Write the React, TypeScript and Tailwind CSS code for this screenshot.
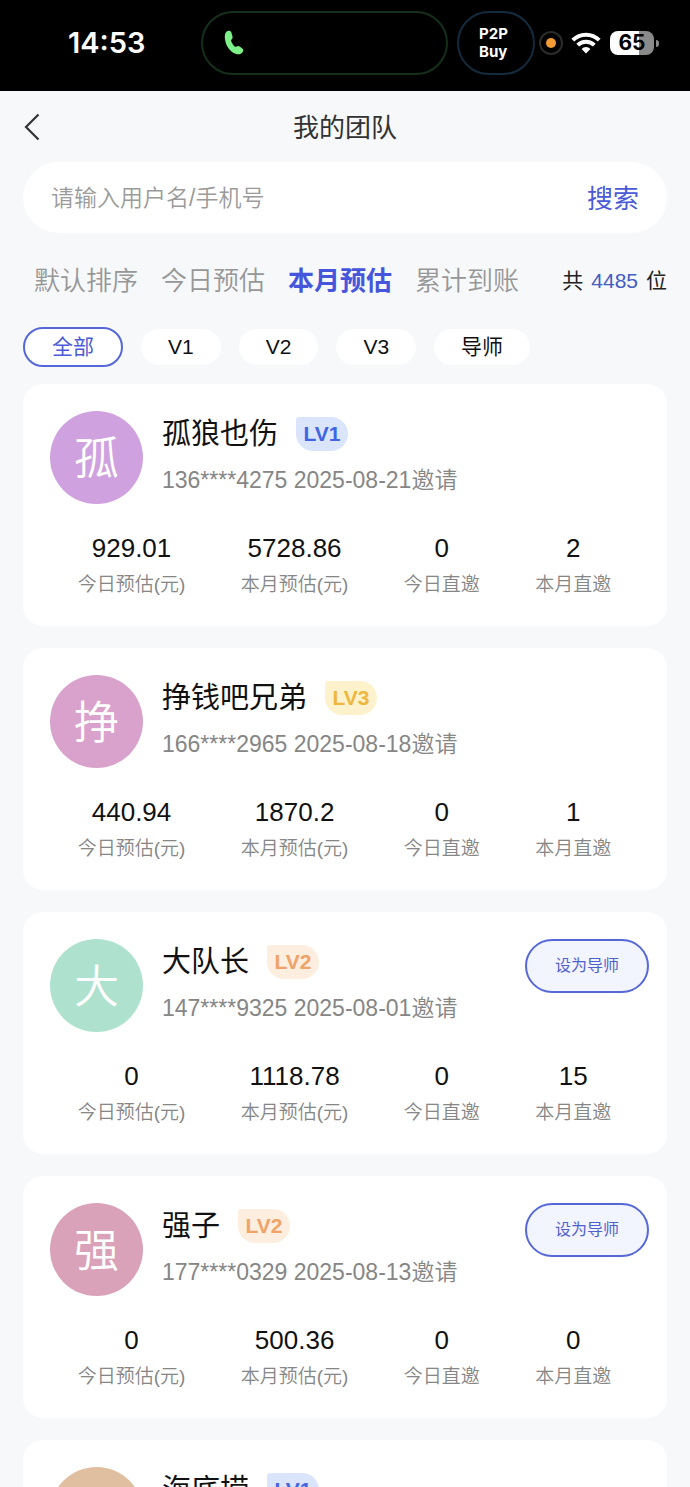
import React from 'react';
import clsx from 'clsx';

type Level = 'LV1' | 'LV2' | 'LV3';

interface Member {
  name: string;
  level: Level;
  color: string;
  info?: string;
  stats?: string[];
  canPromote?: boolean;
}

const SORT_TABS = ['默认排序', '今日预估', '本月预估', '累计到账'];
const FILTERS = ['全部', 'V1', 'V2', 'V3', '导师'];
const STAT_LABELS = ['今日预估(元)', '本月预估(元)', '今日直邀', '本月直邀'];

const LEVEL_STYLES: Record<Level, string> = {
  LV1: 'bg-[#dae4fb] text-[#4164e3]',
  LV2: 'bg-[#fdeedf] text-[#efa368]',
  LV3: 'bg-[#fdf2cb] text-[#efb73e]',
};

const MEMBERS: Member[] = [
  {
    name: '孤狼也伤',
    level: 'LV1',
    color: 'bg-[#cfa2df]',
    info: '136****4275 2025-08-21邀请',
    stats: ['929.01', '5728.86', '0', '2'],
  },
  {
    name: '挣钱吧兄弟',
    level: 'LV3',
    color: 'bg-[#d9a2cd]',
    info: '166****2965 2025-08-18邀请',
    stats: ['440.94', '1870.2', '0', '1'],
  },
  {
    name: '大队长',
    level: 'LV2',
    color: 'bg-[#aee2cf]',
    info: '147****9325 2025-08-01邀请',
    stats: ['0', '1118.78', '0', '15'],
    canPromote: true,
  },
  {
    name: '强子',
    level: 'LV2',
    color: 'bg-[#d9a2b8]',
    info: '177****0329 2025-08-13邀请',
    stats: ['0', '500.36', '0', '0'],
    canPromote: true,
  },
  { name: '海底捞', level: 'LV1', color: 'bg-[#e0bfa0]' },
];

const StatusBar: React.FC = () => (
  <div className="flex h-[91px] shrink-0 items-center bg-black pb-[5px] pl-[68px] pr-[31px] font-['Inter',sans-serif] text-white">
    <span className="w-[133px] text-[29px] leading-8 font-semibold">14:53</span>

    {/* Call island */}
    <div className="flex h-16 flex-1 items-center rounded-full border-2 border-[#15301a] pl-[21px]">
      <svg width="20" height="26" viewBox="0 0 20 26" fill="#7df08a" aria-hidden="true">
        <path d="M3 1.200C4.700.2 6.800.6 7.300 2.200l1.200 4.300c.3 1.400 0 2.200-.9 2.900-.7.6-.7 1.200-.3 2.100.8 1.800 1.700 3.300 3.100 4.700.7.7 1.300.8 2.100.3 1.200-.8 2.200-.8 3.200 0l2.600 2c1.300 1.100 1.300 2.300.2 3.700-1.600 2-4 2.700-6.800 1.600C5.700 22.300 1.200 15 .8 7.600.7 4.600 1.400 2.200 3 1.200Z" />
      </svg>
    </div>

    <div className="ml-[9px] flex h-16 w-[78px] flex-col justify-center rounded-full border-2 border-[#142b3d] pl-5 text-[15px] leading-[18px] font-bold">
      <span>P2P</span>
      <span>Buy</span>
    </div>

    <div className="ml-1 flex size-6 items-center justify-center rounded-full border-2 border-[#2b2b2b]">
      <span className="size-[10px] rounded-full bg-[#f39b35]" />
    </div>

    <svg className="ml-2" width="30" height="22" viewBox="0 0 30 22" fill="none" stroke="#fff" strokeWidth="4" aria-hidden="true">
      <path d="M1.800 8.200a18.700 18.700 0 0 1 26.400 0" />
      <path d="M6.700 13.100a11.800 11.800 0 0 1 16.600 0" />
      <path d="M15 21.500l-4.400-4.600a6.200 6.200 0 0 1 8.800 0z" fill="#fff" stroke="none" />
    </svg>

    <div className="ml-[9px] flex items-center gap-[2px]">
      <span className="flex h-6 w-11 items-center justify-center rounded-lg bg-linear-to-r from-white from-65% to-[#8a8a8a] to-65% text-[21px] leading-6 font-bold text-black">
        65
      </span>
      <span className="h-[7px] w-[3px] rounded-r-full bg-[#8a8a8a]" />
    </div>
  </div>
);

const MemberCard: React.FC<{ member: Member }> = ({ member }) => (
  <li className="rounded-[20px] bg-white pt-[27px] pb-[22px]">
    <div className="flex pl-[27px] pr-[18px]">
      {/* Avatar */}
      <div
        className={clsx(
          'flex size-[93px] shrink-0 items-center justify-center rounded-full pt-1 text-[45px] leading-none font-[350] text-white',
          member.color,
        )}
      >
        {member.name[0]}
      </div>

      <div className="ml-[19px] flex-1">
        <div className="flex h-[46px] items-center">
          <h2 className="text-[29px] leading-9 text-[#111]">{member.name}</h2>
          <span
            className={clsx(
              'ml-[18px] flex h-[34px] w-[52px] items-center justify-center rounded-[17px] rounded-tl-[3px] text-[21px] leading-6 font-bold',
              LEVEL_STYLES[member.level],
            )}
          >
            {member.level}
          </span>
        </div>
        {member.info && (
          <p className="text-[23px] leading-[46px] font-[350] text-[#868686]">{member.info}</p>
        )}
      </div>

      {member.canPromote && (
        <button
          type="button"
          className="h-[54px] w-[124px] rounded-full border-2 border-[#5668d8] bg-[#f2f4fe] text-[16px] text-[#4f60cf]"
        >
          设为导师
        </button>
      )}
    </div>

    {/* Stats */}
    {member.stats && (
      <dl className="mt-[26px] flex justify-around pr-7 pl-[27px] text-center">
        {member.stats.map((value, i) => (
          <div key={STAT_LABELS[i]} className="flex flex-col-reverse">
            <dt className="text-[19px] leading-[38px] font-[350] text-[#868686]">{STAT_LABELS[i]}</dt>
            <dd className="text-[26px] leading-9 text-[#111]">{value}</dd>
          </div>
        ))}
      </dl>
    )}
  </li>
);

export default function App() {
  return (
    <div className="flex h-screen flex-col overflow-hidden bg-[#f6f8fa] font-['Liberation_Sans','Noto_Sans_CJK_SC',sans-serif]">
      <StatusBar />

      <header className="grid h-[71px] shrink-0 grid-cols-[1fr_auto_1fr] items-center px-[23px]">
        <button type="button" aria-label="返回" className="w-fit">
          <svg width="18" height="28" viewBox="0 0 18 28" fill="none" stroke="#333" strokeWidth="2.2" aria-hidden="true">
            <path d="M15.500 1.500 3 14 15.500 26.500" />
          </svg>
        </button>
        <h1 className="pt-[2px] text-[26px] leading-9 text-[#333]">我的团队</h1>
      </header>

      <main className="flex-1 overflow-y-auto px-[23px] [scrollbar-width:none]">
        <form className="flex h-[71px] items-center rounded-full bg-white px-7 pt-[2px]" onSubmit={(e) => e.preventDefault()}>
          <input
            type="text"
            aria-label="请输入用户名/手机号"
            placeholder="请输入用户名/手机号"
            className="min-w-0 flex-1 text-[23px] font-[350] outline-none placeholder:text-[#9b9b9b]"
          />
          <button type="submit" className="text-[26px] leading-9 text-[#4b5bd6]">
            搜索
          </button>
        </form>

        <div className="flex h-[94px] items-center justify-between pt-[2px] pl-[11px]">
          <nav className="flex gap-[23px]">
            {SORT_TABS.map((tab) => (
              <button
                key={tab}
                type="button"
                className={clsx(
                  'text-[26px] leading-9 whitespace-nowrap',
                  tab === '本月预估' ? 'font-bold text-[#4656dc]' : 'font-[350] text-[#979797]',
                )}
              >
                {tab}
              </button>
            ))}
          </nav>
          <p className="flex gap-2 text-[21px] leading-9 text-[#222]">
            共<span className="text-[#445cc4]">4485</span>位
          </p>
        </div>

        <div className="flex h-[39px] items-center gap-[18px]">
          {FILTERS.map((filter) => (
            <button
              key={filter}
              type="button"
              className={clsx(
                'rounded-full bg-white px-[27px] text-[21px] leading-9',
                filter === '全部' ? 'border-2 border-[#5668d8] text-[#4b5bd6]' : 'text-[#111]',
              )}
            >
              {filter}
            </button>
          ))}
        </div>

        <ul className="mt-[18px] flex flex-col gap-[22px]">
          {MEMBERS.map((member) => (
            <MemberCard key={member.name} member={member} />
          ))}
        </ul>
      </main>
    </div>
  );
}
